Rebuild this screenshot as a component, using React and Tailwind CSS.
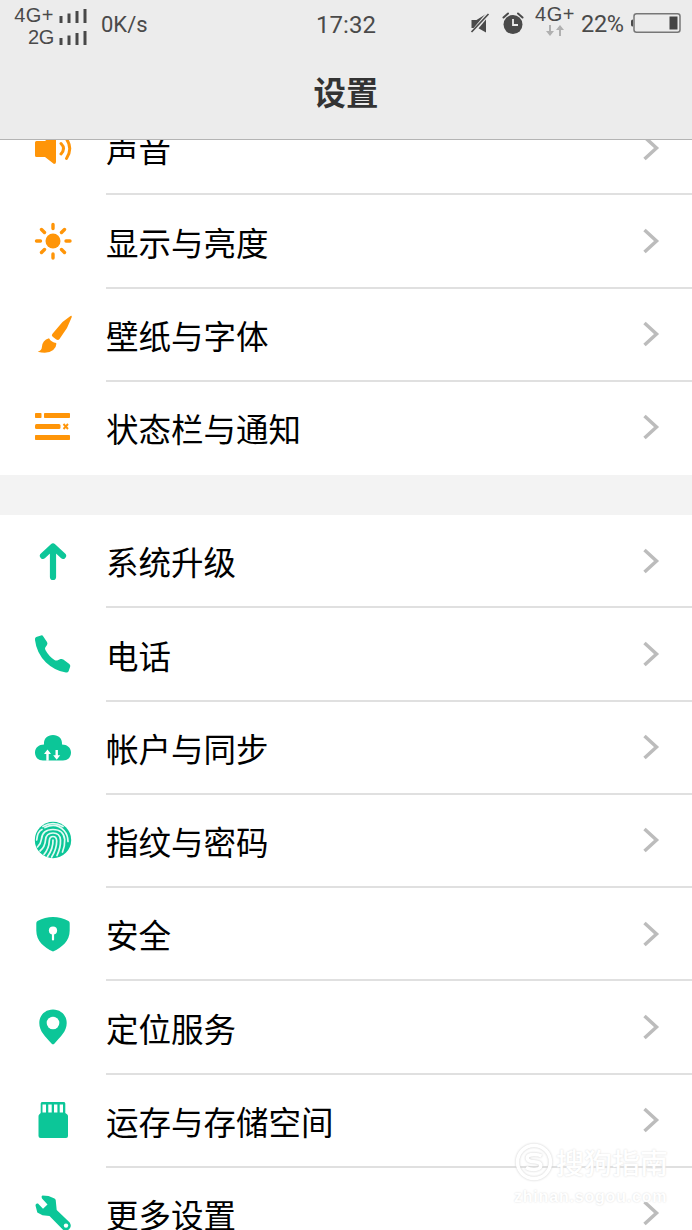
import React from "react";

const ORANGE = "#ff9508";
const GREEN = "#0cc698";

function SoundIcon() {
  return (
    <g fill={ORANGE}>
      <path d="M3.500 13H12L21 6q2-1.200 2 .8V34q0 2-2 2L12 29H3.500Q2 29 2 27.500V14.500Q2 13 3.500 13Z" />
      <path d="M28 15.500q5 5 0 10.500M33.500 11q6.500 9.500 0 19.500" fill="none" stroke={ORANGE} strokeWidth="3" strokeLinecap="round" />
    </g>
  );
}

function SunIcon() {
  return (
    <g stroke={ORANGE} strokeWidth="3.400" strokeLinecap="round">
      <circle cx="20" cy="20" r="7.500" fill={ORANGE} stroke="none" />
      <path d="M20 3.500v4M20 33v4M3.500 20h4M33 20h4M8.500 8.500l3 3M28.500 28.500l3 3M31.500 8.500l-3 3M8.500 31.500l3-3" />
    </g>
  );
}

function BrushIcon() {
  return (
    <g fill={ORANGE}>
      <path d="M37.500 2q1.600-.8 1.200 1.200L34 14 26.500 25q-1.200 1.800-3.200.6l-3.600-2.800q-1.500-1.300-.4-2.800L29.500 8Z" />
      <path d="M16 24.300q2.500 4.200 7.200 4.800.6 3.800-3 6.900-5.500 4.500-15.500 1.700 4-1 4.200-4.700.3-6.500 7.100-8.700Z" />
    </g>
  );
}

function StatusListIcon() {
  return (
    <g fill={ORANGE}>
      <rect x="2" y="6" width="6.500" height="5" rx=".8" />
      <rect x="11" y="6" width="26" height="5" rx=".8" />
      <rect x="2" y="17" width="25.500" height="5" rx="1.500" />
      <rect x="2" y="28" width="35" height="5" rx=".8" />
      <path d="m30.500 17 4.500 5m0-5-4.500 5" stroke={ORANGE} strokeWidth="1.900" />
    </g>
  );
}

function ArrowIcon() {
  return (
    <path d="M20 36V6M10 14.800 20 5.500l10 9.300" fill="none" stroke={GREEN} strokeWidth="6.200" strokeLinecap="round" strokeLinejoin="round" />
  );
}

function PhoneIcon() {
  return (
    <path fill={GREEN} d="M3.200 3 8 1.400q1.500-.4 2.300 1L14 8q.9 1.500 0 3l-1.600 2.300q-.8 1.200 0 2.700Q16 22.500 21.500 26q1.500.9 2.700.4l3.300-1.300q1.500-.5 2.800.4l6 4.500q1.300 1.100.9 2.600l-1.600 4.600Q35 38.800 33 38.600 22 37 13 28.500 3.500 19 2 6 1.700 3.600 3.200 3Z" />
  );
}

function CloudIcon() {
  return (
    <g>
      <path fill={GREEN} d="M11 17.500C10.500 11.500 14.500 8 20 8s9.500 3.500 9 9.500c5 0 9 3 9 8s-3.500 8-8 8H10c-4.500 0-8-3-8-8s4-8 9-8Z" />
      <path d="M14.500 33.800V25M23.700 23v7" stroke="#fff" strokeWidth="2.400" />
      <path d="m11 27 3.500-4.500L18 27ZM20.200 28.300l3.500 4.500 3.500-4.500Z" fill="#fff" />
    </g>
  );
}

function FingerprintIcon() {
  return (
    <g>
      <circle cx="20" cy="20" r="18.200" fill={GREEN} />
      <g fill="none" stroke="#e5faf4" strokeWidth="1.700" strokeLinecap="round">
        <path d="M10 6.500Q20 .5 30 6.500" />
        <path d="M3.700 20Q4.500 11.500 9 9.500M12 7.500q11-5.500 19 3 4 4.500 4 11" />
        <path d="M4.500 27q3.500-3.500 4-8 .8-9.500 11.500-9.500t11.700 10Q32 26 29.500 32" />
        <path d="M7 31q5-4 5.500-11 .5-7 7.500-7t7.500 7q.3 7.500-3.500 15.500" />
        <path d="M11 34.500q5-6 5.300-13.500.2-4.500 3.700-4.500t3.700 4.500q0 8-5 16" />
        <path d="M20 20q.3 8.500-5.500 16.500" />
      </g>
    </g>
  );
}

function ShieldIcon() {
  return (
    <g>
      <path fill={GREEN} d="M20 3q8 0 15.500 4 1.300.8 1.200 2.500v7C36.700 27 29 33.500 20 37.500 11 33.500 3.300 27 3.300 16.500v-7q-.1-1.700 1.200-2.500Q12 3 20 3Z" />
      <circle cx="20" cy="16.500" r="4.100" fill="#fff" />
      <path d="M20 18v7.500" stroke="#fff" strokeWidth="2.200" strokeLinecap="round" />
    </g>
  );
}

function PinIcon() {
  return (
    <g>
      <path fill={GREEN} d="M20 2.500c8 0 13.700 6 13.700 13.500 0 8.500-6.200 13.500-12.200 20.500q-1.500 1.700-3 0C12.500 29.500 6.300 24.500 6.300 16 6.300 8.500 12 2.500 20 2.500Z" />
      <circle cx="20" cy="16" r="6.300" fill="#fff" />
    </g>
  );
}

function CardIcon() {
  return (
    <g>
      <path fill={GREEN} d="M9 2h22q1.300 0 1.300 1.500V13l2 1.500q.7.700.7 2V36q0 2-2 2H7.500q-2 0-2-2V16.500q0-1.300.7-2l1.500-1.500V3.500Q7.700 2 9 2Z" />
      <path fill="#fff" d="M9.500 4.500H13v8H9.500zM15.300 4.500h3.400v8h-3.400zM21 4.500h3.400v8H21zM26.700 4.500H30v8h-3.300z" />
    </g>
  );
}

function WrenchIcon() {
  return (
    <g>
      <path fill={GREEN} d="m9.500 2.500 6 .5 6 2.500q1 .5 1.200 1.500l1 10L36.700 29.500Q39 33 36.500 35.800q-3.500 3.500-7 .5L16.500 23l-7-.8L4.300 19.500 2.500 12.500q0-2.500 2.500-2l5 5.300 4.500-4.200L9 5.500Q8 3 9.500 2.500Z" />
      <circle cx="33" cy="32.600" r="2.200" fill="#fff" />
    </g>
  );
}

const groups = [
  [
    ["声音", SoundIcon],
    ["显示与亮度", SunIcon],
    ["壁纸与字体", BrushIcon],
    ["状态栏与通知", StatusListIcon],
  ],
  [
    ["系统升级", ArrowIcon],
    ["电话", PhoneIcon],
    ["帐户与同步", CloudIcon],
    ["指纹与密码", FingerprintIcon],
    ["安全", ShieldIcon],
    ["定位服务", PinIcon],
    ["运存与存储空间", CardIcon],
    ["更多设置", WrenchIcon],
  ],
];

function Row({ label, Icon, last }) {
  return (
    <div className="flex h-[93.25px] shrink-0 pl-[33px]">
      <svg className="mr-[33px] mb-0.5 size-10 shrink-0 self-center" viewBox="0 0 40 40">
        <Icon />
      </svg>
      <div className={`flex flex-1 items-center justify-between border-b-2 pr-8 ${last ? "border-transparent" : "border-[#e0e0e0]"}`}>
        <span className="pt-0.5 text-[32.5px] leading-none text-black">{label}</span>
        <svg className="h-7 w-[18px]" viewBox="0 0 18 28">
          <path d="M2.500 3 14.500 14 2.500 25" fill="none" stroke="#bcbcbc" strokeWidth="3.500" />
        </svg>
      </div>
    </div>
  );
}

function Signal() {
  return (
    <svg className="h-[15px] w-[28px]" viewBox="0 0 28 15">
      <path d="M2 8v7M10 5.500V15M18 3v12M26 1v14" stroke="#484848" strokeWidth="3" />
    </svg>
  );
}

function StatusBar() {
  return (
    <div className="grid h-12 grid-cols-3 font-[Roboto,'Liberation_Sans',sans-serif] text-[#4a4a4a]">
      <div className="flex pl-[11px]">
        <div className="flex w-[76px] flex-col items-end pt-1 font-['Liberation_Sans',sans-serif]">
          <div className="flex items-center gap-[5px] text-[20px] leading-[22px]">
            <span className="tracking-[0.5px]">4G+</span>
            <Signal />
          </div>
          <div className="flex items-center gap-[5px] text-[20px] leading-[22px]">
            <span className="tracking-[-0.4px]">2G</span>
            <Signal />
          </div>
        </div>
        <span className="pl-3.5 text-[22px] leading-[49px]">0K/s</span>
      </div>
      <span className="text-center text-[24px] leading-[50px]">17:32</span>
      <div className="flex justify-end pr-[11px]">
        <svg className="mt-3 mr-3 h-6 w-5 shrink-0" viewBox="0 0 20 24">
          <path fill="#4a4a4a" d="M1.500 8h5L16 2v18.500l-8-4.500H1.500Z" />
          <path d="M2 21 18 2" stroke="#ececec" strokeWidth="4" />
          <path d="M1.500 20 18.500 2" stroke="#4a4a4a" strokeWidth="1.700" />
        </svg>
        <svg className="mt-3 mr-2.5 h-6 w-[22px] shrink-0" viewBox="0 0 22 24">
          <circle cx="11" cy="12.500" r="9.500" fill="#4a4a4a" />
          <path d="M1.500 5.500 6 1.500M16 1.500l4.500 4" stroke="#4a4a4a" strokeWidth="2" strokeLinecap="round" />
          <path d="M11 7v6h5" fill="none" stroke="#ececec" strokeWidth="1.800" />
        </svg>
        <div className="flex w-[42px] shrink-0 flex-col items-center pt-1">
          <span className="font-['Liberation_Sans',sans-serif] text-[20px] leading-[21px] tracking-[0.5px]">4G+</span>
          <svg className="h-3 w-5" viewBox="0 0 20 12">
            <path d="M5 0v8M15 3v8" stroke="#b0b0b0" strokeWidth="2" />
            <path d="m1 6 4 5 4-5ZM11 5l4-5 4 5Z" fill="#b0b0b0" />
          </svg>
        </div>
        <span className="ml-[5px] w-[44px] shrink-0 text-[23.5px] leading-[49px] tracking-[-0.3px]">22%</span>
        <svg className="mt-[13px] ml-[5px] h-5 w-[51px] shrink-0" viewBox="0 0 51 20">
          <rect x="4" y=".8" width="46" height="18.400" rx="2.500" fill="none" stroke="#777" strokeWidth="1.500" />
          <path d="M3 6.500Q1 6.500 1 8v4q0 1.500 2 1.500Z" fill="#4a4a4a" />
          <rect x="39.500" y="3.500" width="8" height="13" fill="#444" />
        </svg>
      </div>
    </div>
  );
}

export default function App() {
  return (
    <main className="relative flex h-[1230px] w-[692px] flex-col overflow-hidden bg-white font-['Noto_Sans_CJK_SC',sans-serif]">
      <header className="h-[140px] shrink-0 border-b border-[#b4b4b4] bg-[#ececec]">
        <StatusBar />
        <h1 className="pt-[27px] text-center text-[32.4px] leading-none font-bold text-[#333]">设置</h1>
      </header>
      <div className="flex h-[335px] shrink-0 flex-col justify-end overflow-hidden">
        {groups[0].map(([label, Icon], i) => (
          <Row key={label} label={label} Icon={Icon} last={i === 3} />
        ))}
      </div>
      <div className="h-10 shrink-0 bg-[#f3f3f3]" />
      <div className="flex h-[715px] shrink-0 flex-col overflow-hidden">
        {groups[1].map(([label, Icon], i) => (
          <Row key={label} label={label} Icon={Icon} last={i === 7} />
        ))}
      </div>
      <div className="absolute right-[22px] bottom-[22px] flex w-[156px] flex-col text-white [text-shadow:0_0_2px_#d8d8d8]">
        <div className="flex items-center gap-0.5">
          <svg className="size-[40px] shrink-0 drop-shadow-[0_0_1px_#cccccc]" viewBox="0 0 40 40">
            <circle cx="20" cy="20" r="16.500" fill="none" stroke="#fff" strokeWidth="3.500" />
            <path d="M27.500 14Q25 12.500 20 12.500c-9 0-9 7 0 7.300 9 .4 9 7.700 0 7.700q-5 0-8-2" fill="none" stroke="#fff" strokeWidth="3.500" />
          </svg>
          <span className="text-[28px] leading-[38px] font-medium whitespace-nowrap">搜狗指南</span>
        </div>
        <span className="pt-1 text-[16px] leading-[22px] font-bold tracking-[0.8px] whitespace-nowrap font-['Liberation_Sans',sans-serif]">zhinan.sogou.com</span>
      </div>
    </main>
  );
}
